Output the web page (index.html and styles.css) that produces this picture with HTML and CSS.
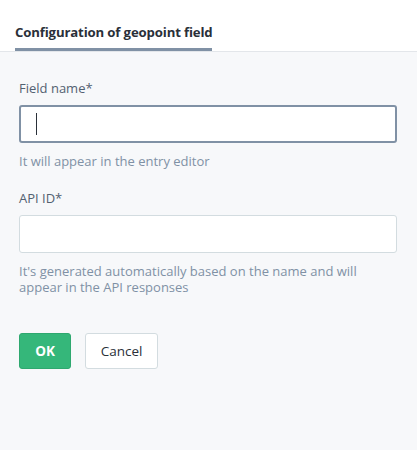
FILE: index.html
```html
<!DOCTYPE html>
<html>
<head>
<meta charset="utf-8">
<link rel="stylesheet" href="styles.css">
</head>
<body>
<div class="page">
  <header class="header">
    <div class="tab">Configuration of geopoint field</div>
  </header>
  <main class="body">
    <div class="field">
      <label class="label">Field name*</label>
      <div class="input focused"><span class="caret"></span></div>
      <div class="help">It will appear in the entry editor</div>
    </div>
    <div class="field">
      <label class="label">API ID*</label>
      <div class="input"></div>
      <div class="help">It's generated automatically based on the name and will appear in the API responses</div>
    </div>
    <div class="actions">
      <button class="btn ok">OK</button>
      <button class="btn cancel">Cancel</button>
    </div>
  </main>
</div>
</body>
</html>
```
FILE: styles.css
```css
html, body { margin: 0; padding: 0; }
body {
  font-family: "Open Sans", "Noto Sans", sans-serif;
  background: #f7f8fa;
  width: 417px;
  height: 450px;
  overflow: hidden;
}
.page { display: flex; flex-direction: column; height: 450px; }
.header {
  background: #ffffff;
  height: 51px;
  border-bottom: 1px solid #e3e6ea;
  padding-left: 15px;
  display: flex;
  align-items: flex-end;
  box-sizing: content-box;
}
.tab {
  font-size: 13.2px;
  font-weight: 700;
  color: #2a3039;
  letter-spacing: -0.15px;
  height: 48px;
  line-height: 20px;
  padding-top: 19px;
  border-bottom: 3px solid #8091a5;
  box-sizing: border-box;
  width: 197px;
  white-space: nowrap;
}
.body {
  padding: 26px 20px 0 19px;
  display: flex;
  flex-direction: column;
}
.field { display: flex; flex-direction: column; }
.label {
  font-size: 13px;
  line-height: 20px;
  color: #536171;
  margin-bottom: 7px;
}
.input {
  height: 38px;
  box-sizing: border-box;
  background: #ffffff;
  border: 1px solid #d3dce0;
  border-radius: 3px;
  display: flex;
  align-items: center;
}
.input.focused {
  border: 2px solid #8091a5;
  padding-left: 15px;
}
.caret {
  display: block;
  width: 1px;
  height: 22px;
  background: #2a3039;
}
.help {
  font-size: 13px;
  line-height: 16px;
  color: #8091a5;
  margin-top: 10px;
  margin-bottom: 19px;
  padding-right: 20px;
}
.actions {
  display: flex;
  gap: 14px;
  margin-top: 19px;
}
.btn {
  font-family: "Open Sans", "Noto Sans", sans-serif;
  font-size: 13.5px;
  height: 36px;
  border-radius: 3px;
  box-sizing: border-box;
  cursor: pointer;
}
.ok {
  width: 52px;
  background: #35b77a;
  border: 1px solid #2ea86f;
  color: #ffffff;
  font-weight: 700;
}
.cancel {
  width: 73px;
  background: #ffffff;
  border: 1px solid #d3dce0;
  color: #2a3039;
}
```
